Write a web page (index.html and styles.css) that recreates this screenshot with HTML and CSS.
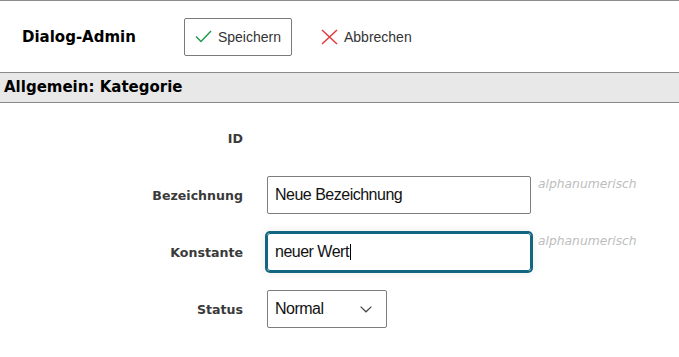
FILE: index.html
```html
<!DOCTYPE html>
<html lang="de">
<head>
<meta charset="utf-8">
<title>Dialog-Admin</title>
<link rel="stylesheet" href="styles.css">
</head>
<body>
<div class="page">
  <header class="toolbar">
    <h1 class="title">Dialog-Admin</h1>
    <button class="btn" type="button">
      <svg class="icon" width="17" height="13" viewBox="0 0 17 13"><polyline points="1,6.5 6,11.5 16,1" fill="none" stroke="#1f9a4a" stroke-width="1.5"/></svg>
      <span>Speichern</span>
    </button>
    <button class="btn btn-plain" type="button">
      <svg class="icon" width="17" height="16" viewBox="0 0 17 16"><path d="M1 1 L16 15 M16 1 L1 15" fill="none" stroke="#e23a3a" stroke-width="1.5"/></svg>
      <span>Abbrechen</span>
    </button>
  </header>
  <h2 class="section">Allgemein: Kategorie</h2>
  <form class="form">
    <div class="row">
      <label class="label">ID</label>
    </div>
    <div class="row">
      <label class="label">Bezeichnung</label>
      <div class="field"><span class="value">Neue Bezeichnung</span></div>
      <span class="hint">alphanumerisch</span>
    </div>
    <div class="row">
      <label class="label">Konstante</label>
      <div class="field field-focus"><span class="value">neuer Wert</span><span class="caret"></span></div>
      <span class="hint">alphanumerisch</span>
    </div>
    <div class="row">
      <label class="label">Status</label>
      <div class="select"><span class="value">Normal</span>
        <svg class="chevron" width="12" height="7" viewBox="0 0 12 7"><polyline points="0.6,0.6 6,5.8 11.4,0.6" fill="none" stroke="#444" stroke-width="1.2"/></svg>
      </div>
    </div>
  </form>
</div>
</body>
</html>
```
FILE: styles.css
```css
* { box-sizing: border-box; }
html, body { margin: 0; padding: 0; background: #fff; }
body { font-family: "Liberation Sans", Arial, sans-serif; color: #222; }

.page { border-top: 1px solid #8c8c8c; }

.toolbar {
  display: flex;
  align-items: center;
  height: 71px;
  padding-left: 22px;
}
.title {
  margin: 0 48px 0 0;
  font-family: "DejaVu Sans", Verdana, sans-serif;
  font-weight: bold;
  font-size: 15px;
  color: #000;
}
.btn {
  display: inline-flex;
  align-items: center;
  gap: 6px;
  height: 38px;
  padding: 0 10px;
  border: 1px solid #7a7a7a;
  border-radius: 2px;
  background: #fff;
  font-family: "Liberation Sans", Arial, sans-serif;
  font-size: 14px;
  color: #333;
}
.btn-plain { border-color: transparent; margin-left: 18px; }
.icon { display: block; }

.section {
  margin: 0;
  height: 31px;
  line-height: 29px;
  padding-left: 4px;
  border-top: 1px solid #8a8a8a;
  border-bottom: 1px solid #8a8a8a;
  background: #e8e8e8;
  font-family: "DejaVu Sans", Verdana, sans-serif;
  font-weight: bold;
  font-size: 15px;
  color: #000;
}

.form {
  display: flex;
  flex-direction: column;
  gap: 19px;
  padding-top: 16px;
}
.row {
  display: flex;
  align-items: center;
  min-height: 38px;
}
.label {
  width: 243px;
  margin-right: 24px;
  text-align: right;
  font-family: "DejaVu Sans", Verdana, sans-serif;
  font-weight: bold;
  font-size: 12.6px;
  color: #3a3a3a;
}
.field {
  display: flex;
  align-items: center;
  width: 264px;
  height: 38px;
  padding-left: 7px;
  border: 1px solid #7d7d7d;
  border-radius: 2px;
  font-size: 16px;
  letter-spacing: -0.5px;
  color: #111;
}
.field-focus {
  border-color: #13667f;
  border-radius: 3px;
  box-shadow: 0 0 0 2px #13667f, 0 0 8px 3px rgba(0, 0, 0, 0.07);
}
.caret {
  display: inline-block;
  width: 1px;
  height: 16px;
  margin-left: 1px;
  background: #000;
}
.hint {
  align-self: flex-start;
  margin-left: 7px;
  font-family: "DejaVu Sans", Verdana, sans-serif;
  font-style: italic;
  font-size: 12.3px;
  line-height: 16px;
  color: #bdbdbd;
}
.select {
  display: flex;
  align-items: center;
  justify-content: space-between;
  width: 120px;
  height: 38px;
  padding: 0 14px 0 7px;
  border: 1px solid #7d7d7d;
  border-radius: 2px;
  font-size: 16px;
  letter-spacing: -0.5px;
  color: #111;
}
.chevron { display: block; }
```
